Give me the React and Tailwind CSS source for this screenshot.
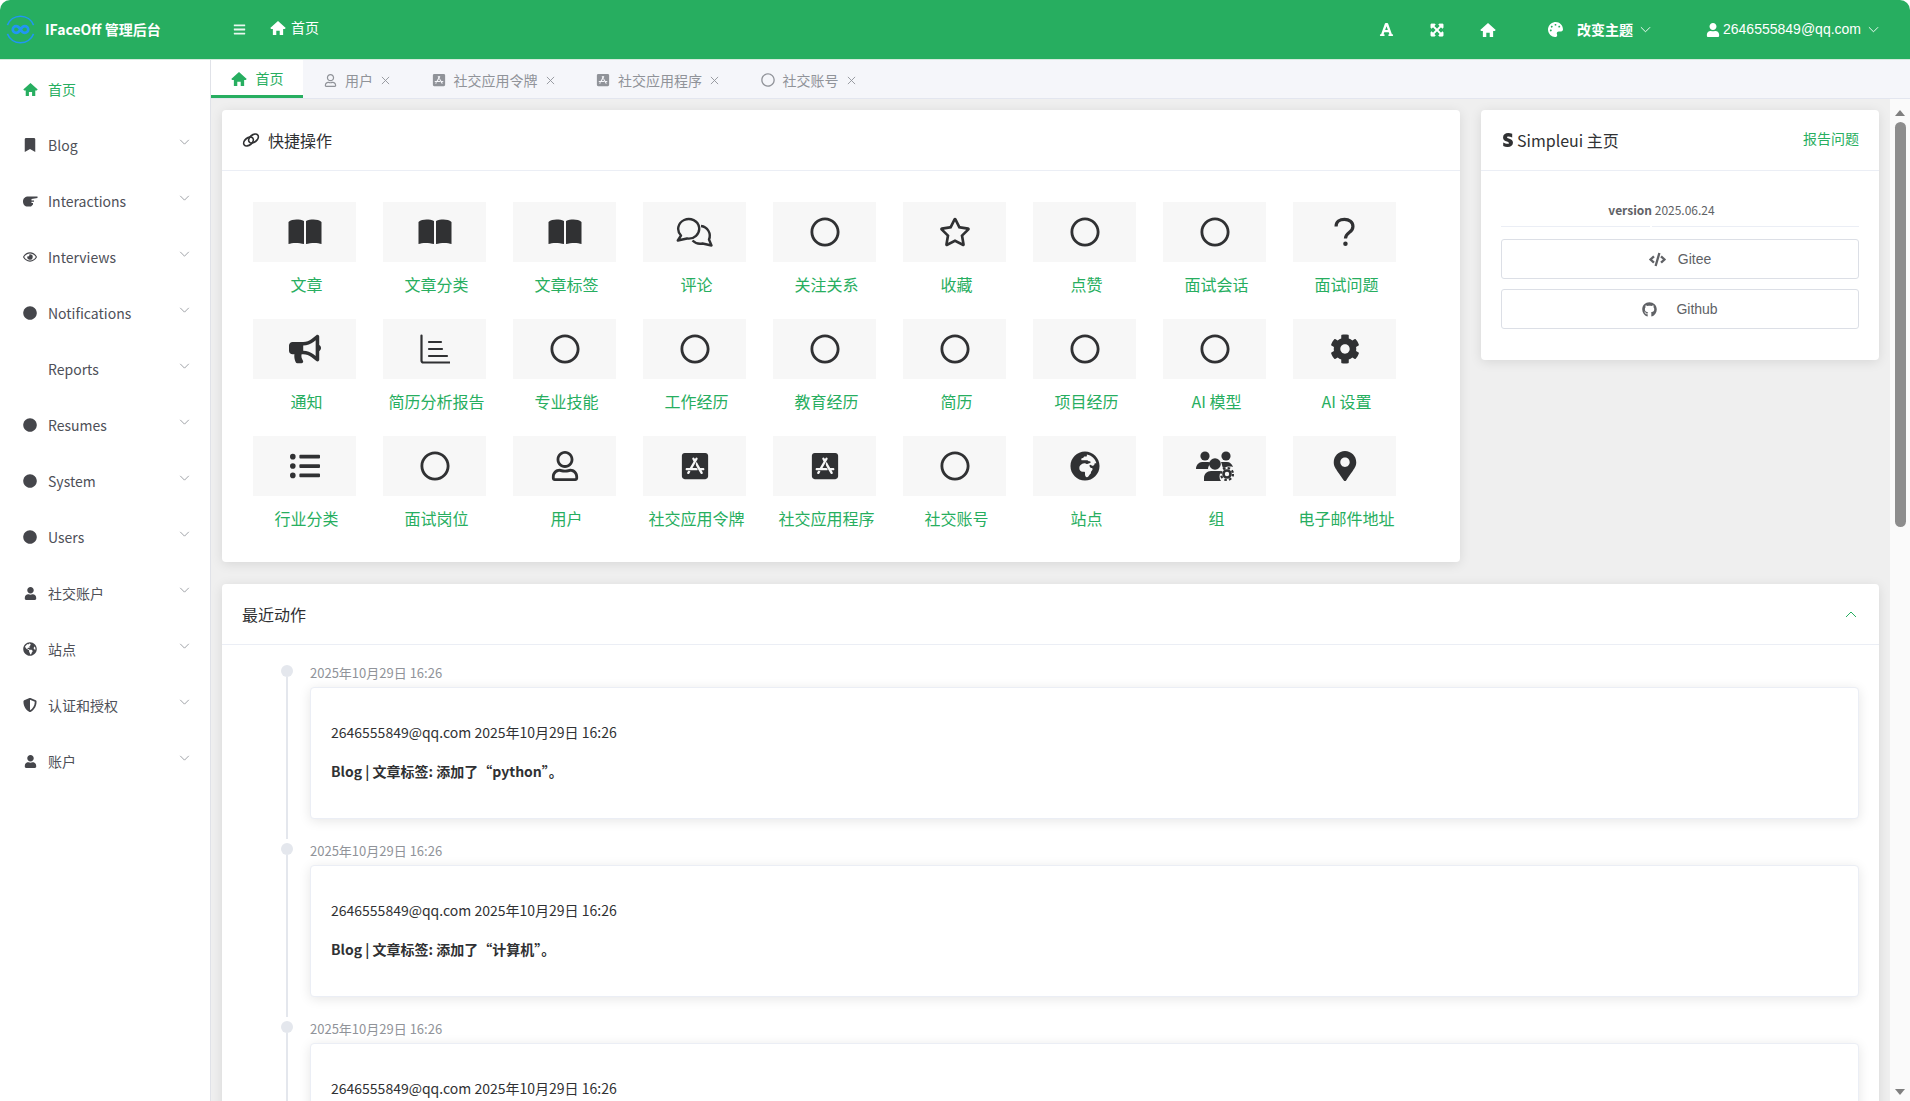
import React from "react";
import {
  FaAppStoreIos,
  FaBars,
  FaBookmark,
  FaBullhorn,
  FaCircle,
  FaCode,
  FaCog,
  FaExpandArrowsAlt,
  FaFont,
  FaGithub,
  FaGlobeAfrica,
  FaGlobeAmericas,
  FaListUl,
  FaMapMarkerAlt,
  FaPalette,
  FaRegCircle,
  FaRegEye,
  FaRegStar,
  FaRegUser,
  FaShieldAlt,
  FaStripeS,
  FaUser,
} from "react-icons/fa";

const Chevron = ({ className = "" }) => (
  <svg viewBox="0 0 12 7" fill="none" stroke="currentColor" strokeWidth="1" className={className}>
    <path d="M1 1l5 5 5-5" />
  </svg>
);

const HomeIcon = ({ className = "" }) => (
  <svg viewBox="0 0 20 18" fill="currentColor" className={className}>
    <path d="M10 0l10 9-1.400 1.400h-2V18H12.200v-5.500H7.800V18H3.400v-7.600h-2L0 9z" />
  </svg>
);

const PointIcon = () => (
  <svg viewBox="0 0 15 11" width="15" height="11" fill="currentColor">
    <path d="M5.500.5h9v1.600L8.500 3v1.500H11v1.300H8.500V7h1.500v1.500L8 10.500H4.500C2 10.500 0 8.500 0 5.500S2 .5 5.500.5z" />
  </svg>
);

const BookIcon = () => (
  <svg viewBox="0 0 34 26" width="34" height="26" fill="currentColor">
    <path d="M.5 3C4 0 11 0 16 2v23c-5-1.500-12-1.500-15.500 0z" />
    <path d="M18 2c5-2 12-2 15.500 1v22c-3.500-1.500-10.500-1.500-15.500 0z" />
  </svg>
);

const QuestionIcon = () => (
  <svg viewBox="0 0 24 32" width="23" height="30" fill="none" stroke="currentColor" strokeWidth="3.400">
    <path d="M3 10C3 5 7 2.500 12 2.500s9 3 9 7.500c0 7-8 6-8 13" />
    <circle cx="13" cy="28.500" r="2.400" fill="currentColor" stroke="none" />
  </svg>
);

const CommentsIcon = () => (
  <svg viewBox="0 0 38 30" width="38" height="30" fill="none" stroke="currentColor" strokeWidth="2.400" strokeLinejoin="round">
    <path d="M5 18.500A10.500 9.800 0 1 1 11 21.500L1.800 23.500z" />
    <path d="M25 9a9.800 9.800 0 0 1 8 13.500l2.500 6-9-2a11 11 0 0 1-10-3" />
  </svg>
);

const LinkIcon = () => (
  <svg viewBox="0 0 18 16" width="18" height="16" fill="none" stroke="currentColor" strokeWidth="1.700" className="mr-[8px]">
    <ellipse cx="6.500" cy="9.500" rx="5.500" ry="3.600" transform="rotate(-40 6.500 9.500)" />
    <ellipse cx="11.500" cy="6.500" rx="5.500" ry="3.600" transform="rotate(-40 11.500 6.500)" />
  </svg>
);

const ReportIcon = () => (
  <svg viewBox="0 0 30 30" width="30" height="30" fill="none" stroke="currentColor" strokeWidth="2.200" strokeLinecap="round">
    <path d="M1.500 1.500v25a2 2 0 0 0 2 2h26" />
    <path d="M9 8h12M9 15h13M9 22h18" />
  </svg>
);

const UsersGearIcon = () => (
  <svg viewBox="0 0 38 30" width="38" height="30" fill="currentColor">
    <circle cx="9" cy="5" r="4.600" />
    <circle cx="30" cy="5" r="4.600" />
    <path d="M0 18c0-4 3-7 6-7h6c1 0 2 .4 3 1-2 2-3 4-3 6z" />
    <path d="M25 11h6c3 0 5 2 6 5-3-1-8 0-10 1-1-2-1-4-2-6z" />
    <circle cx="19" cy="13" r="5.800" />
    <path d="M8 30v-3c0-4 3-7 7-7h8c1 0 2 .2 2 .5-2 3-2 7 0 9.500z" />
    <circle cx="31" cy="23" r="3.500" fill="none" stroke="currentColor" strokeWidth="2.600" />
    <circle cx="31" cy="23" r="6" fill="none" stroke="currentColor" strokeWidth="2.200" strokeDasharray="2.500 2.200" />
  </svg>
);

const menu = [
  { name: "Blog", icon: <FaBookmark size={14} /> },
  { name: "Interactions", icon: <PointIcon /> },
  { name: "Interviews", icon: <FaRegEye size={14} /> },
  { name: "Notifications", icon: <FaCircle size={14} /> },
  { name: "Reports", icon: null },
  { name: "Resumes", icon: <FaCircle size={14} /> },
  { name: "System", icon: <FaCircle size={14} /> },
  { name: "Users", icon: <FaCircle size={14} /> },
  { name: "社交账户", icon: <FaUser size={13} /> },
  { name: "站点", icon: <FaGlobeAmericas size={14} /> },
  { name: "认证和授权", icon: <FaShieldAlt size={14} /> },
  { name: "账户", icon: <FaUser size={13} /> },
];

const tabs = [
  { name: "用户", icon: <FaRegUser size={13} /> },
  { name: "社交应用令牌", icon: <FaAppStoreIos size={14} /> },
  { name: "社交应用程序", icon: <FaAppStoreIos size={14} /> },
  { name: "社交账号", icon: <FaRegCircle size={14} /> },
];

const circle = <FaRegCircle size={30} />;

const quickLinks = [
  { name: "文章", icon: <BookIcon /> },
  { name: "文章分类", icon: <BookIcon /> },
  { name: "文章标签", icon: <BookIcon /> },
  { name: "评论", icon: <CommentsIcon /> },
  { name: "关注关系", icon: circle },
  { name: "收藏", icon: <FaRegStar size={32} /> },
  { name: "点赞", icon: circle },
  { name: "面试会话", icon: circle },
  { name: "面试问题", icon: <QuestionIcon /> },
  { name: "通知", icon: <FaBullhorn size={32} /> },
  { name: "简历分析报告", icon: <ReportIcon /> },
  { name: "专业技能", icon: circle },
  { name: "工作经历", icon: circle },
  { name: "教育经历", icon: circle },
  { name: "简历", icon: circle },
  { name: "项目经历", icon: circle },
  { name: "AI 模型", icon: circle },
  { name: "AI 设置", icon: <FaCog size={30} /> },
  { name: "行业分类", icon: <FaListUl size={30} /> },
  { name: "面试岗位", icon: circle },
  { name: "用户", icon: <FaRegUser size={30} /> },
  { name: "社交应用令牌", icon: <FaAppStoreIos size={30} /> },
  { name: "社交应用程序", icon: <FaAppStoreIos size={30} /> },
  { name: "社交账号", icon: circle },
  { name: "站点", icon: <FaGlobeAfrica size={30} /> },
  { name: "组", icon: <UsersGearIcon /> },
  { name: "电子邮件地址", icon: <FaMapMarkerAlt size={30} /> },
];

const actions = ["python", "计算机", "python"];

const Logo = () => (
  <svg viewBox="0 0 32 32" width="31" height="31" fill="none" className="shrink-0">
    <path d="M2.500 11.500A14.500 14.500 0 0 1 29.500 11.500" stroke="#2196f3" strokeWidth="1.600" />
    <path d="M2.500 20.500A14.500 14.500 0 0 0 29.500 20.500" stroke="#2196f3" strokeWidth="1.600" />
    <path
      d="M16 16c-1.500-2.500-3-3.500-4.500-3.500a3.500 3.500 0 0 0 0 7c1.500 0 3-1 4.500-3.500s3-3.500 4.500-3.500a3.500 3.500 0 0 1 0 7c-1.500 0-3-1-4.500-3.500z"
      stroke="#2196f3"
      strokeWidth="2.800"
    />
  </svg>
);

const Header = () => (
  <header className="flex h-[60px] shrink-0 items-center rounded-t-[10px] border-b border-[#d5eadd] bg-[#27ae60] text-white">
    <div className="flex w-[211px] items-center gap-[9px] pl-[5px] text-[14px] font-bold">
      <Logo />
      <span className="whitespace-nowrap">IFaceOff 管理后台</span>
    </div>
    <FaBars size={13} className="ml-[22px] opacity-90" />
    <HomeIcon className="ml-[24px] -mt-[4px] h-[14px] w-[16px]" />
    <span className="ml-[5px] -mt-[4px] text-[14px]">首页</span>
    <div className="ml-auto flex items-center pr-[31px]">
      <FaFont size={15} />
      <FaExpandArrowsAlt size={14} stroke="currentColor" strokeWidth={24} className="ml-[36px]" />
      <HomeIcon className="ml-[36px] h-[14px] w-[16px]" />
      <FaPalette size={15} className="ml-[52px]" />
      <span className="ml-[14px] text-[14px] font-bold">改变主题</span>
      <Chevron className="ml-[7px] h-[7px] w-[11px]" />
      <FaUser size={14} className="ml-[55px]" />
      <span className="ml-[3px] font-['Liberation_Sans',sans-serif] text-[14px]">2646555849@qq.com</span>
      <Chevron className="ml-[7px] h-[7px] w-[11px]" />
    </div>
  </header>
);

const Sidebar = () => (
  <aside className="w-[211px] shrink-0 border-r border-[#e0e2e8] bg-white pt-[1px] text-[14px] text-[#4e5058]">
    <div className="flex h-[56px] items-center text-[#27ae60]">
      <span className="flex w-[48px] justify-center pl-[12px]">
        <HomeIcon className="h-[13px] w-[15px]" />
      </span>
      <span>首页</span>
    </div>
    {menu.map((item) => (
      <div key={item.name} className="relative flex h-[56px] items-center">
        <span className="flex w-[48px] justify-center pl-[12px] text-[#45464b]">{item.icon}</span>
        <span>{item.name}</span>
        <Chevron className="absolute right-[20px] top-[22px] h-[6px] w-[11px] text-[#909399]" />
      </div>
    ))}
  </aside>
);

const Tabs = () => (
  <div className="flex h-[39px] shrink-0 items-stretch border-b border-[#e3e6ef] bg-[#f5f6fa] text-[14px] text-[#909399]">
    <div className="flex w-[92px] items-center justify-center gap-[9px] border-b-[3px] border-[#27ae60] bg-white pt-[2px] text-[#27ae60]">
      <HomeIcon className="h-[14px] w-[16px]" />
      <span>首页</span>
    </div>
    {tabs.map((tab, i) => (
      <div key={i} className="flex items-center pl-[21px] pr-[20.5px] pt-[2px]">
        {tab.icon}
        <span className="ml-[8px]">{tab.name}</span>
        <svg viewBox="0 0 10 10" width="9" height="9" stroke="currentColor" fill="none" className="ml-[8px]">
          <path d="M1 1l8 8M9 1l-8 8" />
        </svg>
      </div>
    ))}
  </div>
);

const Card = ({ title, right, className = "", children }) => (
  <section className={`rounded-[4px] bg-white shadow-[0_2px_12px_0_rgba(0,0,0,0.1)] ${className}`}>
    <div className="flex h-[61px] items-center justify-between border-b border-[#ebeef5] px-[20px] text-[16px] text-[#303133]">
      {title}
      {right}
    </div>
    {children}
  </section>
);

const QuickLinks = () => (
  <Card
    className="w-[1238px] shrink-0"
    title={
      <span className="flex items-center">
        <LinkIcon />
        快捷操作
      </span>
    }
  >
    <div className="grid grid-cols-[repeat(9,130px)] gap-y-[21px] pl-[31px] pt-[31px] pb-[30px]">
      {quickLinks.map((item, i) => (
        <div key={i} className="flex w-[130px] flex-col">
          <div className="flex h-[60px] w-[103px] items-center justify-center bg-[#f7f7f7] text-[#303133]">
            {item.icon}
          </div>
          <div className="mt-[8px] h-[28px] w-[107px] text-center text-[16px] leading-[28px] whitespace-nowrap text-[#27ae60]">
            {item.name}
          </div>
        </div>
      ))}
    </div>
  </Card>
);

const InfoCard = () => (
  <Card
    className="h-[250px] flex-1"
    title={
      <span className="flex items-center">
        <FaStripeS size={14} className="mr-[2px]" />
        Simpleui 主页
      </span>
    }
    right={<span className="-mt-[3px] text-[14px] text-[#27ae60]">报告问题</span>}
  >
    <div className="px-[20px] text-[12px] text-[#606266]">
      <div className="mt-[30px] pr-[37px] text-center leading-[18px]">
        <b>version</b> 2025.06.24
      </div>
      <div className="mt-[7px] flex gap-[2px]">
        <span className="h-px w-[149px] bg-[#ebeef5]" />
        <span className="h-px flex-1 bg-[#ebeef5]" />
      </div>
      <Button icon={<FaCode size={17} />} label="Gitee" gap="gap-[12px]" className="mt-[12px]" />
      <Button icon={<FaGithub size={15} />} label="Github" gap="gap-[19px]" className="mt-[10px]" />
    </div>
  </Card>
);

const Button = ({ icon, label, gap, className }) => (
  <div
    className={`flex h-[40px] items-center justify-center rounded-[3px] border border-[#dcdfe6] font-['Liberation_Sans',sans-serif] text-[14px] text-[#606266] ${gap} ${className}`}
  >
    {icon}
    <span>{label}</span>
  </div>
);

const Timeline = () => (
  <div className="pt-[16px]">
    {actions.map((text, i) => (
      <div key={i} className="relative mr-[20px] h-[178px] pl-[88px]">
        <span className="absolute left-[59px] top-[4px] h-[12px] w-[12px] rounded-full bg-[#e4e7ed]" />
        <span className="absolute bottom-0 left-[64px] top-[16px] w-[2px] bg-[#e4e7ed]" />
        <div className="h-[25px] text-[13px] leading-[23px] text-[#909399]">2025年10月29日 16:26</div>
        <div className="mt-[1px] h-[132px] rounded-[4px] border border-[#ebeef5] bg-white px-[20px] pt-[32px] text-[14px] text-[#303133] shadow-[0_2px_12px_0_rgba(0,0,0,0.1)]">
          <div className="leading-[24px]">2646555849@qq.com 2025年10月29日 16:26</div>
          <div className="mt-[15px] leading-[24px] font-bold">
            Blog | 文章标签: 添加了“{text}”。
          </div>
        </div>
      </div>
    ))}
  </div>
);

const Scrollbar = () => (
  <div className="flex w-[20px] shrink-0 flex-col items-center justify-between bg-[#fafafa] pb-[6px] pt-[11px]">
    <div className="flex w-full flex-col items-center">
      <span className="h-0 w-0 border-x-[5px] border-b-[6px] border-x-transparent border-b-[#7f7f7f]" />
      <span className="mt-[6px] h-[405px] w-[11px] rounded-full bg-[#8d8d8d]" />
    </div>
    <span className="h-0 w-0 border-x-[5px] border-t-[6px] border-x-transparent border-t-[#7f7f7f]" />
  </div>
);

export default function App() {
  return (
    <div className="flex h-[1101px] w-[1910px] flex-col overflow-hidden bg-white font-['Noto_Sans_CJK_SC',sans-serif]">
      <Header />
      <div className="flex min-h-0 flex-1">
        <Sidebar />
        <main className="flex min-w-0 flex-1 flex-col">
          <Tabs />
          <div className="flex min-h-0 flex-1">
            <div className="flex min-w-0 flex-1 flex-col gap-[22px] overflow-hidden bg-[#efefef] pl-[11px] pr-[11px] pt-[11px]">
              <div className="flex items-start gap-[21px]">
                <QuickLinks />
                <InfoCard />
              </div>
              <Card
                className="shrink-0"
                title={<span>最近动作</span>}
                right={<Chevron className="mr-[2px] h-[7px] w-[12px] rotate-180 text-[#27ae60]" />}
              >
                <Timeline />
              </Card>
            </div>
            <Scrollbar />
          </div>
        </main>
      </div>
    </div>
  );
}
